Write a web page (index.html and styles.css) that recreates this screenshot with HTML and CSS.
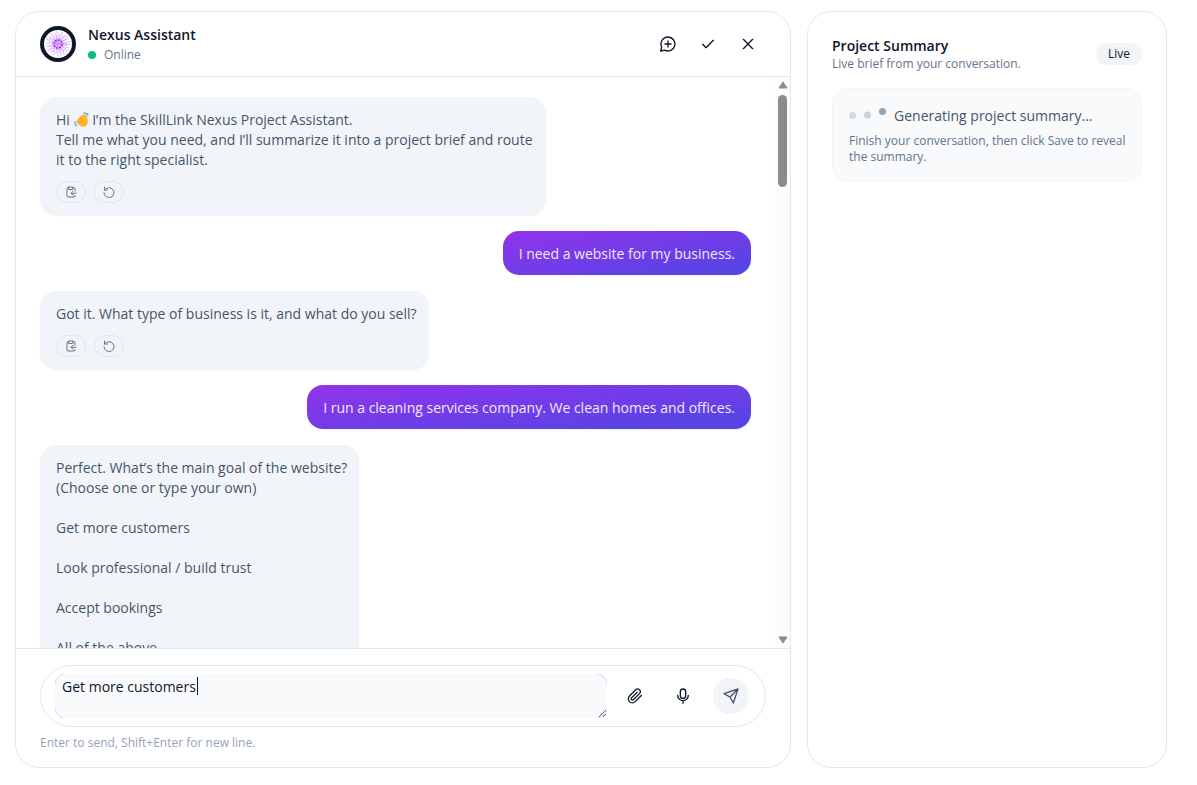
FILE: index.html
```html
<!DOCTYPE html>
<html lang="en">
<head>
<meta charset="utf-8">
<meta name="viewport" content="width=device-width, initial-scale=1">
<title>Nexus Assistant</title>
<link rel="stylesheet" href="styles.css">
</head>
<body>
<svg class="sprite" aria-hidden="true">
  <symbol id="i-clip" viewBox="0 0 24 24"><path d="M16 3h2a2 2 0 0 1 2 2v5M8 3H6a2 2 0 0 0-2 2v15a2 2 0 0 0 2 2h12a2 2 0 0 0 2-2v-1M8 2h8v5H8zM22 14.500h-9M16 10.500l-4 4 4 4"/></symbol>
  <symbol id="i-undo" viewBox="0 0 24 24"><path d="M3 2v6h6M3.500 8A10 10 0 1 1 2 13.500"/></symbol>
</svg>
<main class="page">
  <section class="panel chat">
    <header class="chat-head">
      <svg class="avatar" viewBox="0 0 36 36" aria-hidden="true">
        <circle cx="18" cy="18" r="16" fill="#fff" stroke="#0f172a" stroke-width="4"/>
        <g fill="none" stroke="#c084fc">
          <circle cx="18" cy="18" r="10.500" stroke-width="2.500" stroke-dasharray="1 2.300" opacity=".5"/>
          <circle cx="18" cy="18" r="8" stroke-width="3" stroke-dasharray="2 1.200" opacity=".5"/>
          <circle cx="18" cy="18" r="12" stroke-width="1.500" stroke-dasharray="1 5" opacity=".6"/>
          <circle cx="18" cy="18" r="5.500" stroke-width="2" stroke="#b45cf0" stroke-dasharray="1.500 .8" opacity=".6"/>
        </g>
        <circle cx="18" cy="18" r="5" fill="#dcb0fa"/>
        <circle cx="18" cy="18" r="4" fill="none" stroke="#a32ee8" stroke-width="1.500" stroke-dasharray="2 1"/>
        <path d="M15 18h6M18 15v6" stroke="#b86af2" opacity=".6"/>
      </svg>
      <div class="who">
        <h1 class="name">Nexus Assistant</h1>
        <p class="status"><span class="dot"></span>Online</p>
      </div>
      <div class="head-actions">
        <button class="icon-btn" type="button" aria-label="New chat"><svg class="ico" viewBox="0 0 24 24"><path d="M12 1.500a10.500 10.500 0 1 1-5 19.800L1 22.500l1.500-6A10.500 10.500 0 0 1 12 1.500zM12 7.500v9M7.500 12h9"/></svg></button>
        <button class="icon-btn" type="button" aria-label="Save"><svg class="ico" viewBox="0 0 24 24"><path d="M4 12.500l5 5L20 6.500"/></svg></button>
        <button class="icon-btn" type="button" aria-label="Close"><svg class="ico" viewBox="0 0 24 24"><path d="M5 5l14 14M19 5L5 19"/></svg></button>
      </div>
    </header>

    <div class="scroll-area">
      <div class="messages">
        <article class="msg bot">
          <p>Hi <svg class="wave" viewBox="0 0 16 16" role="img" aria-label="waving hand"><path d="M3 9L8 3.500Q9 2.500 10 3.500L11 2.500Q13 2 13 4L14 5Q15 8 14.500 12L13 15Q9 17 6 14L2.500 11Q2 9.500 3 9z" fill="#fbb52f"/><path d="M5 9l3-3M6 12l3-3" stroke="#e88b20" fill="none"/><path d="M10 1.500Q14 .5 15 4M1 10Q.5 13 3 15" stroke="#49a5e8" stroke-width="1.300" fill="none"/></svg> I’m the SkillLink Nexus Project Assistant.<br>Tell me what you need, and I’ll summarize it into a project brief and route it to the right specialist.</p>
          <div class="tools">
            <button class="tool" type="button" aria-label="Copy"><svg class="ico-s"><use href="#i-clip"/></svg></button>
            <button class="tool" type="button" aria-label="Retry"><svg class="ico-s"><use href="#i-undo"/></svg></button>
          </div>
        </article>
        <article class="msg user"><p>I need a website for my business.</p></article>
        <article class="msg bot">
          <p>Got it. What type of business is it, and what do you sell?</p>
          <div class="tools">
            <button class="tool" type="button" aria-label="Copy"><svg class="ico-s"><use href="#i-clip"/></svg></button>
            <button class="tool" type="button" aria-label="Retry"><svg class="ico-s"><use href="#i-undo"/></svg></button>
          </div>
        </article>
        <article class="msg user"><p>I run a cleaning services company. We clean homes and offices.</p></article>
        <article class="msg bot">
          <p>Perfect. What’s the main goal of the website?<br>(Choose one or type your own)<br><br>Get more customers<br><br>Look professional / build trust<br><br>Accept bookings<br><br>All of the above</p>
        </article>
      </div>
      <div class="bar" aria-hidden="true">
        <svg class="arrow" viewBox="0 0 10 8"><path d="M5 1L9 7H1z"/></svg>
        <div class="track"><div class="thumb"></div></div>
        <svg class="arrow" viewBox="0 0 10 8"><path d="M5 7L1 1h8z"/></svg>
      </div>
    </div>

    <footer class="chat-foot">
      <form class="composer">
        <div class="field">
          <textarea class="input" id="message" aria-label="Message">Get more customers</textarea>
          <span class="caret" aria-hidden="true"></span>
        </div>
        <div class="composer-actions">
          <button class="icon-btn" type="button" aria-label="Attach file"><svg class="ico" viewBox="0 0 24 24"><path d="M21.500 11.200l-9.200 9.200a6 6 0 0 1-8.500-8.500l9.200-9.200a4 4 0 0 1 5.700 5.700l-9.200 9.200a2 2 0 0 1-2.800-2.800l8.500-8.500"/></svg></button>
          <button class="icon-btn" type="button" aria-label="Voice input"><svg class="ico" viewBox="0 0 24 24"><rect x="8" y="1.500" width="8" height="14" rx="4"/><path d="M4 11a8 8 0 0 0 16 0M12 19v4"/></svg></button>
          <button class="icon-btn send" type="submit" aria-label="Send"><svg class="ico" viewBox="0 0 24 24"><path d="M22.500 1.500L15.500 22.500l-5-9-9-5zM22.500 1.500l-12 12"/></svg></button>
        </div>
      </form>
      <p class="hint">Enter to send, Shift+Enter for new line.</p>
    </footer>
  </section>

  <aside class="panel side">
    <header class="side-head">
      <div>
        <h2 class="side-title">Project Summary</h2>
        <p class="side-sub">Live brief from your conversation.</p>
      </div>
      <span class="badge">Live</span>
    </header>
    <div class="card">
      <div class="progress">
        <svg class="dots" viewBox="0 0 38 20" aria-hidden="true"><circle cx="3.500" cy="9.500" r="3.500" fill="#d5dce5"/><circle cx="18.500" cy="9" r="3.500" fill="#cbd3df"/><circle cx="33.500" cy="5.500" r="3.500" fill="#94a3b8"/></svg>
        <p class="progress-text">Generating project summary...</p>
      </div>
      <p class="card-note">Finish your conversation, then click Save to reveal the summary.</p>
    </div>
  </aside>
</main>
</body>
</html>
```
FILE: styles.css
```css
* { box-sizing: border-box; }
body { margin: 0; background: #fff; color: #0f172a; font-family: "Open Sans", "Liberation Sans", sans-serif; font-size: 14px; line-height: 20px; }
h1, h2, p { margin: 0; font-weight: 400; }
button { border: 0; padding: 0; background: none; color: inherit; font: inherit; cursor: pointer; }
.sprite { position: absolute; width: 0; height: 0; }

.page { display: grid; grid-template-columns: minmax(0, 1fr) 360px; gap: 16px; height: 100vh; padding: 11px 30px 17px 15px; }
.panel { border: 1px solid #e2e8f0; border-radius: 24px; background: #fff; overflow: hidden; }
.chat { display: flex; flex-direction: column; min-height: 0; }

.chat-head { display: flex; align-items: center; gap: 12px; padding: 11px 24px; border-bottom: 1px solid #e2e8f0; }
.avatar { width: 36px; height: 36px; flex: none; }
.who { padding-top: 2px; }
.name { font-size: 14px; font-weight: 600; }
.status { display: flex; align-items: center; gap: 8px; color: #64748b; font-size: 12px; }
.dot { width: 8px; height: 8px; border-radius: 50%; background: #10b981; }
.head-actions { display: flex; gap: 4px; margin-left: auto; }
.icon-btn { display: grid; place-items: center; width: 36px; height: 36px; border-radius: 50%; }
.ico { width: 16px; height: 16px; fill: none; stroke: currentColor; stroke-width: 2; stroke-linecap: round; stroke-linejoin: round; }

.scroll-area { display: flex; flex: 1; min-height: 0; }
.messages { display: flex; flex: 1; flex-direction: column; gap: 16px; min-width: 0; padding: 20px 24px; overflow-y: auto; scrollbar-width: none; }
.msg { flex: none; max-width: 506px; padding: 13px 16px 11px; border-radius: 16px; box-shadow: 0 1px 2px rgba(15, 23, 42, .05); }
.bot { align-self: flex-start; padding-right: 12px; background: #f1f5f9; color: #475569; }
.user { align-self: flex-end; background: linear-gradient(to bottom right, #9333ea, #4f46e5); color: #f3e8ff; font-weight: 500; }
.wave { width: 15px; height: 15px; vertical-align: -2px; }
.tools { display: flex; gap: 8px; margin: 11px 0 1px; }
.tool { display: grid; place-items: center; width: 30px; height: 22px; border: 1px solid #e2e8f0; border-radius: 11px; color: #64748b; }
.ico-s { width: 12px; height: 12px; fill: none; stroke: currentColor; stroke-width: 2; stroke-linecap: round; stroke-linejoin: round; }

.bar { display: flex; flex-direction: column; align-items: center; width: 15px; padding: 4px 0; background: #fcfcfc; }
.arrow { width: 10px; height: 8px; fill: #8b8b8b; stroke: #8b8b8b; stroke-linejoin: round; }
.track { flex: 1; padding: 6px 0; }
.thumb { width: 9px; height: 92px; border-radius: 5px; background: #8b8b8b; }

.chat-foot { padding: 16px 24px; border-top: 1px solid #e2e8f0; }
.composer { display: flex; align-items: center; gap: 10px; padding: 8px 16px 8px 14px; border: 1px solid #e2e8f0; border-radius: 31px; }
.field { position: relative; display: flex; flex: 1; min-width: 0; overflow: hidden; }
.input { flex: 1; min-width: 0; height: 44px; padding: 3px 7px; border: 0; border-radius: 12px; outline: 0; box-shadow: 0 0 0 1px #ddd6fe; background: #f8fafc; color: #0f172a; font: inherit; resize: vertical; }
.caret { position: absolute; top: 3px; left: 142px; width: 1px; height: 18px; background: #0f172a; }
.composer-actions { display: flex; gap: 12px; }
.send { background: #f1f5f9; color: #475569; }
.hint { margin-top: 8px; color: #94a3b8; font-size: 12px; line-height: 16px; }

.side { padding: 24px; }
.side-head { display: flex; align-items: center; justify-content: space-between; margin-bottom: 16px; }
.side-title { font-size: 14px; font-weight: 600; }
.side-sub { color: #64748b; font-size: 12px; line-height: 16px; }
.badge { padding: 3px 12px; border-radius: 11px; background: #f1f5f9; font-size: 12px; line-height: 16px; }
.card { padding: 16px 8px 16px 16px; border: 1px solid #f1f5f9; border-radius: 16px; background: #f8fafc; }
.progress { display: flex; align-items: center; gap: 7px; margin-bottom: 6px; }
.dots { width: 38px; height: 20px; }
.progress-text { color: #475569; line-height: 22px; font-weight: 500; }
.card-note { color: #64748b; font-size: 12px; line-height: 16px; }
```
